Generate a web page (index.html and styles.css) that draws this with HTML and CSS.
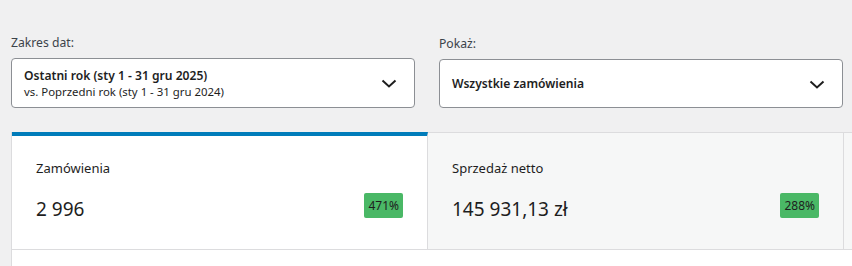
FILE: index.html
```html
<!DOCTYPE html>
<html lang="pl">
  <head>
    <meta charset="UTF-8" />
    <meta name="viewport" content="width=device-width, initial-scale=1.0" />
    <title>Analityka</title>
    <link rel="stylesheet" href="styles.css">
  </head>
  <body>
    <main class="analytics">
      <div class="filters">
        <div class="filter">
          <label class="filter-label">Zakres dat:</label>
          <button class="filter-select">
            <span class="filter-text">
              <span class="filter-main">Ostatni rok (sty 1 - 31 gru 2025)</span>
              <span class="filter-sub">vs. Poprzedni rok (sty 1 - 31 gru 2024)</span>
            </span>
            <svg class="chevron" width="24" height="24" viewBox="0 0 24 24">
              <path d="M5.5 9.5l6.5 6 6.5-6" fill="none" stroke="#1e1e1e" stroke-width="2" />
            </svg>
          </button>
        </div>
        <div class="filter">
          <label class="filter-label">Pokaż:</label>
          <button class="filter-select">
            <span class="filter-text">
              <span class="filter-main">Wszystkie zamówienia</span>
            </span>
            <svg class="chevron" width="24" height="24" viewBox="0 0 24 24">
              <path d="M5.5 9.5l6.5 6 6.5-6" fill="none" stroke="#1e1e1e" stroke-width="2" />
            </svg>
          </button>
        </div>
      </div>

      <div class="summary">
        <div class="summary-item active">
          <div class="summary-label">Zamówienia</div>
          <div class="summary-data">
            <span class="summary-value">2 996</span>
            <span class="summary-delta">471%</span>
          </div>
        </div>
        <div class="summary-item">
          <div class="summary-label">Sprzedaż netto</div>
          <div class="summary-data">
            <span class="summary-value">145 931,13 zł</span>
            <span class="summary-delta">288%</span>
          </div>
        </div>
        <div class="summary-item summary-more"></div>
      </div>

      <div class="chart"></div>
    </main>
  </body>
</html>
```

FILE: styles.css
```css
* {
  margin: 0;
  padding: 0;
  box-sizing: border-box;
}
body {
  background-color: #f0f0f1;
  font-family: "Noto Sans", "Open Sans", sans-serif;
  color: #1e1e1e;
  overflow: hidden;
}
.analytics {
  padding: 34px 0 0 11px;
}
.filters {
  display: flex;
  gap: 24px;
  width: 832px;
}
.filter {
  flex: 1;
  display: flex;
  flex-direction: column;
}
.filter-label {
  font-size: 12.2px;
  line-height: 18px;
  color: #3c434a;
  margin-bottom: 6px;
}
.filter:last-child .filter-label {
  margin-top: 1px;
}
.filter-select {
  display: flex;
  align-items: center;
  justify-content: space-between;
  height: 50px;
  padding: 0 13px 0 12px;
  background-color: #fff;
  border: 1px solid #8c8f94;
  border-radius: 4px;
  font-family: inherit;
  text-align: left;
  color: #1e1e1e;
}
.filter:last-child .filter-select {
  height: 49px;
}
.filter-text {
  display: flex;
  flex-direction: column;
}
.filter-main {
  font-size: 12.1px;
  font-weight: 600;
  line-height: 17px;
}
.filter-sub {
  font-size: 11.4px;
  line-height: 16px;
}
.summary {
  display: flex;
  margin-top: 24px;
  border-top: 1px solid #dcdcde;
  border-left: 1px solid #dcdcde;
}
.summary-item {
  flex: 0 0 416px;
  height: 117px;
  padding: 25px 23px 0 24px;
  background-color: #f6f7f7;
  border-right: 1px solid #dcdcde;
  border-bottom: 1px solid #dcdcde;
}
.summary-item.active {
  background-color: #fff;
  border-top: 4px solid #007cba;
  margin-top: -1px;
  height: 118px;
  padding-top: 22px;
}
.summary-more {
  flex: 1;
}
.summary-label {
  font-size: 13px;
  line-height: 20px;
  color: #1e1e1e;
}
.summary-data {
  display: flex;
  align-items: center;
  justify-content: space-between;
  margin-top: 18px;
}
.summary-value {
  font-size: 19px;
  line-height: 26px;
  color: #1e1e1e;
}
.summary-delta {
  background-color: #4ab866;
  color: #1e1e1e;
  font-size: 12px;
  line-height: 25px;
  padding: 0 4px;
  border-radius: 2px;
  margin-right: 1px;
  margin-top: -7px;
}
.chart {
  height: 40px;
  background-color: #fff;
  border-left: 1px solid #dcdcde;
}
```
